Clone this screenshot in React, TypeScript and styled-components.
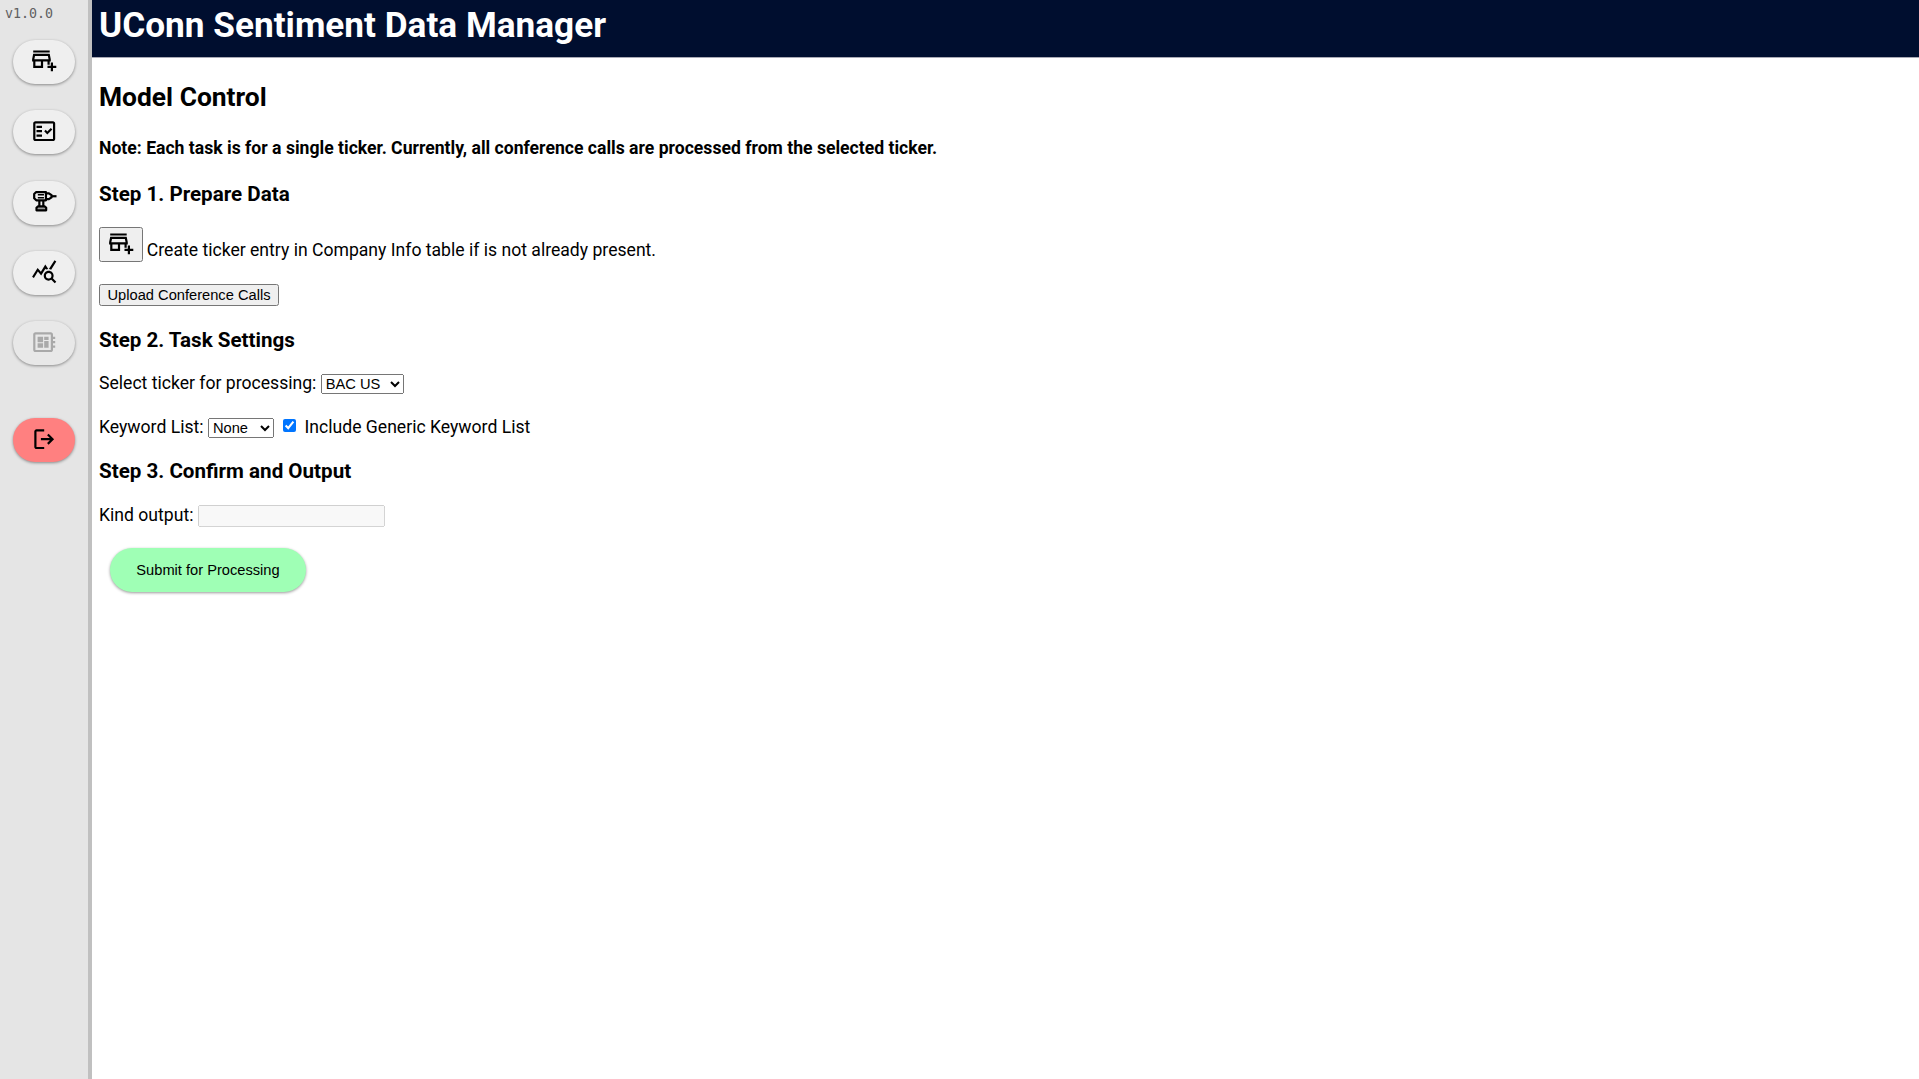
import React from "react";
import styled, { createGlobalStyle, css } from "styled-components";
import {
  MdOutlineAddBusiness,
  MdOutlineFactCheck,
  MdQueryStats,
  MdOutlineDeveloperBoard,
} from "react-icons/md";

const ICON = 26.4;

const GlobalStyle = createGlobalStyle`
  body {
    margin: 0;
    font-family: Roboto, "Liberation Sans", sans-serif;
    font-size: 17.6px;
    line-height: 20px;
    color: #000;
    background: #fff;
  }
`;

const Shell = styled.div`
  display: flex;
  height: 100vh;
  overflow: hidden;
`;

const Sidebar = styled.nav`
  box-sizing: border-box;
  width: 92px;
  flex: none;
  display: flex;
  flex-direction: column;
  align-items: flex-start;
  background: #e5e5e5;
  border-right: 4px solid #c0c0c0;
`;

const Version = styled.span`
  height: 27px;
  padding-left: 5px;
  font: 13.3px/27px "DejaVu Sans Mono", monospace;
  color: #606060;
`;

const pill = css`
  border: none;
  border-radius: 22px;
  height: 44px;
  box-shadow: 0 1px 3px rgba(0, 0, 0, 0.4);
`;

const NavButton = styled.button<{ $tone?: string; $gap?: number; $lift?: number }>`
  ${pill}
  flex: none;
  display: flex;
  align-items: center;
  justify-content: center;
  width: 62px;
  padding: 0 0 ${(p) => p.$lift ?? 2}px;
  margin: ${(p) => p.$gap ?? 26.3}px 0 0 13px;
  background: ${(p) => p.$tone ?? "#efefef"};
  color: #000;

  &:disabled {
    background: #e8e8e8;
    color: #a9a9a9;
  }
`;

const Main = styled.main`
  flex: 1;
  min-width: 0;
`;

const Header = styled.header`
  box-sizing: border-box;
  height: 58px;
  padding: 4px 7px 0;
  background: #000e2f;
  border-bottom: 1px solid #a9a9b5;
`;

const Title = styled.h1`
  margin: 0;
  font-size: 35.2px;
  line-height: 42px;
  color: #fff;
`;

const Content = styled.section`
  display: flex;
  flex-direction: column;
  align-items: flex-start;
  padding: 0 7px;
`;

const PageTitle = styled.h2`
  font-size: 26.4px;
  line-height: 30px;
  margin: 24px 0 0;
`;

const Note = styled.h4`
  font-size: 17.6px;
  margin: 26px 0 0;
`;

const Step = styled.h3<{ $gap: number }>`
  font-size: 20.6px;
  line-height: 24px;
  margin: ${(p) => p.$gap}px 0 0;
`;

const Row = styled.div<{ $gap: number; $end?: boolean }>`
  display: flex;
  align-items: ${(p) => (p.$end ? "flex-end" : "flex-start")};
  gap: ${(p) => (p.$end ? 3.8 : 4.4)}px;
  margin-top: ${(p) => p.$gap}px;
`;

const Caption = styled.span`
  padding-bottom: 2px;
`;

const control = css`
  font-family: "Liberation Sans", Arial, sans-serif;
  font-size: 14.67px;
  color: #000;
`;

const IconButton = styled.button`
  display: flex;
  align-items: center;
  justify-content: center;
  width: 44px;
  height: 35px;
  padding: 0 0 5px;
`;

const TextButton = styled.button`
  ${control}
  height: 22px;
  width: 180px;
  padding: 0;
`;

const Select = styled.select<{ $width: number }>`
  ${control}
  width: ${(p) => p.$width}px;
  height: 20px;
  margin: 1px 0 0;
`;

const Check = styled.input`
  width: 13px;
  height: 13px;
  margin: 2px 4.4px 0 4.4px;
`;

const Output = styled.input`
  box-sizing: border-box;
  width: 187px;
  height: 22px;
  margin: 0;
`;

const Submit = styled.button`
  ${pill}
  ${control}
  width: 196px;
  padding: 0;
  margin: 21px 0 0 11px;
  background: #9fffb5;
`;

const DrillIcon = () => (
  <svg width={ICON} height={ICON} viewBox="0 0 24 24" fill="none" stroke="currentColor" strokeWidth="2">
    <path d="M4.500 3.800H13.600V11.200H4.800L2.900 9.300V5.400z" strokeLinejoin="round" />
    <path d="M13.600 4.800h2.600L18.600 6.400v2.200L16.200 10.200h-2.600" />
    <path d="M18.300 7.500h4.900" />
    <path d="M6.200 6.200h5.600M6.200 8.800h5.600" strokeWidth="1.400" />
    <path d="M7.600 11.200v5.800M11.200 11.200v5.800" />
    <path d="M5 20.300v-2.300l1.200-1.200h6.400l1.200 1.200v2.300z" strokeLinejoin="round" fill="#999" />
  </svg>
);

const LogoutIcon = () => (
  <svg width={ICON} height={ICON} viewBox="0 0 24 24" fill="currentColor">
    <path d="M5 21q-.825 0-1.413-.587T3 19V5q0-.825.587-1.413T5 3h7v2H5v14h7v2zm11-4l-1.375-1.450L17.175 13H9v-2h8.175l-2.550-2.550L16 7l5 5z" />
  </svg>
);

export default function App() {
  return (
    <>
      <GlobalStyle />
      <Shell>
        <Sidebar>
          <Version>v1.0.0</Version>
          <NavButton $gap={13} $lift={6} aria-label="Add company"><MdOutlineAddBusiness size={ICON} /></NavButton>
          <NavButton aria-label="Tasks"><MdOutlineFactCheck size={ICON} /></NavButton>
          <NavButton $lift={3} aria-label="Tools"><DrillIcon /></NavButton>
          <NavButton $lift={3} aria-label="Statistics"><MdQueryStats size={ICON} /></NavButton>
          <NavButton disabled aria-label="Model control"><MdOutlineDeveloperBoard size={ICON} /></NavButton>
          <NavButton $gap={53} $tone="#ff8080" aria-label="Log out"><LogoutIcon /></NavButton>
        </Sidebar>
        <Main>
          <Header>
            <Title>UConn Sentiment Data Manager</Title>
          </Header>
          <Content>
            <PageTitle>Model Control</PageTitle>
            <Note>Note: Each task is for a single ticker. Currently, all conference calls are processed from the selected ticker.</Note>
            <Step $gap={24}>Step 1. Prepare Data</Step>
            <Row $gap={21} $end>
              <IconButton aria-label="Add company"><MdOutlineAddBusiness size={ICON} /></IconButton>
              <Caption>Create ticker entry in Company Info table if is not already present.</Caption>
            </Row>
            <Row $gap={22}><TextButton>Upload Conference Calls</TextButton></Row>
            <Step $gap={22}>Step 2. Task Settings</Step>
            <Row $gap={21}>
              <span>Select ticker for processing:</span>
              <Select $width={83}><option>BAC US</option></Select>
            </Row>
            <Row $gap={23}>
              <span>Keyword List:</span>
              <Select $width={66}><option>None</option></Select>
              <Check type="checkbox" defaultChecked />
              <span>Include Generic Keyword List</span>
            </Row>
            <Step $gap={21}>Step 3. Confirm and Output</Step>
            <Row $gap={22}>
              <span>Kind output:</span>
              <Output disabled />
            </Row>
            <Submit>Submit for Processing</Submit>
          </Content>
        </Main>
      </Shell>
    </>
  );
}
